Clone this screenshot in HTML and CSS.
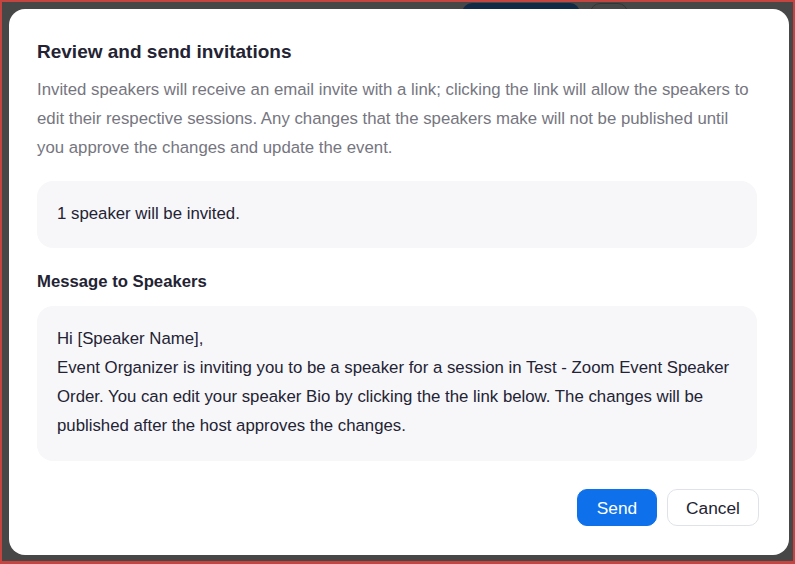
FILE: index.html
```html
<!DOCTYPE html>
<html lang="en">
<head>
<meta charset="utf-8">
<title>Review and send invitations</title>
<link rel="stylesheet" href="styles.css">
</head>
<body>
<div class="screen">
  <div class="page">
    <div class="page-top">
      <span class="pbtn pbtn-primary"></span>
      <span class="pbtn pbtn-outline"></span>
    </div>
  </div>
  <div class="overlay">
    <div class="modal" role="dialog" aria-labelledby="dlg-title">
      <h2 class="modal-title" id="dlg-title">Review and send invitations</h2>
      <p class="modal-desc">Invited speakers will receive an email invite with a link; clicking the link will allow the speakers to edit their respective sessions. Any changes that the speakers make will not be published until you approve the changes and update the event.</p>
      <div class="info-box">1 speaker will be invited.</div>
      <h3 class="section-label">Message to Speakers</h3>
      <div class="message-box">
        <div>Hi [Speaker Name],</div>
        <div>Event Organizer is inviting you to be a speaker for a session in Test - Zoom Event Speaker Order. You can edit your speaker Bio by clicking the the link below. The changes will be published after the host approves the changes.</div>
      </div>
      <div class="modal-footer">
        <button class="btn btn-primary" type="button">Send</button>
        <button class="btn btn-default" type="button">Cancel</button>
      </div>
    </div>
  </div>
</div>
</body>
</html>
```

FILE: styles.css
```css
* { box-sizing: border-box; }

html, body {
  margin: 0;
  padding: 0;
}

body {
  font-family: "Liberation Sans", Arial, sans-serif;
  background: #ffffff;
}

.screen {
  position: relative;
  width: 795px;
  height: 564px;
  border: 2px solid #c6443f;
  border-bottom-width: 3px;
  overflow: hidden;
  background: #ffffff;
}

/* underlying page (dimmed by the overlay) */
.page {
  display: flex;
  flex-direction: column;
  height: 100%;
}

.page-top {
  display: flex;
  gap: 10px;
  padding: 1px 0 0 460px;
}

.pbtn {
  display: block;
  height: 32px;
  border-radius: 10px;
}

.pbtn-primary {
  width: 118px;
  background: #4596ff;
}

.pbtn-outline {
  width: 38px;
  border: 1px solid #b9bcc4;
  background: #ffffff;
}

/* overlay + modal */
.overlay {
  position: absolute;
  inset: 0;
  background: rgba(0, 0, 0, 0.72);
  padding: 7px 4px 4px 7px;
}

.modal {
  width: 780px;
  height: 546px;
  background: #ffffff;
  border-radius: 16px;
  padding: 31px 32px 29px 28px;
  display: flex;
  flex-direction: column;
  color: #232333;
}

.modal-title {
  margin: 0;
  font-size: 19px;
  line-height: 24px;
  font-weight: 700;
  color: #232333;
}

.modal-desc {
  margin: 11px 0 0;
  font-size: 16.8px;
  line-height: 29px;
  color: #76767f;
}

.info-box {
  margin-top: 19px;
  background: #f7f7fa;
  border-radius: 16px;
  padding: 18px 20px 20px;
  font-size: 16.8px;
  line-height: 29px;
  color: #232333;
}

.section-label {
  margin: 22px 0 0;
  font-size: 16.7px;
  line-height: 24px;
  font-weight: 700;
  color: #232333;
}

.message-box {
  margin-top: 12px;
  background: #f7f7fa;
  border-radius: 16px;
  padding: 18px 20px 21px;
  font-size: 16.8px;
  line-height: 29px;
  color: #232333;
}

.modal-footer {
  margin-top: auto;
  display: flex;
  justify-content: flex-end;
  gap: 10px;
  margin-right: -2px;
}

.btn {
  height: 37px;
  border-radius: 10px;
  font-family: "Liberation Sans", Arial, sans-serif;
  font-size: 17.3px;
  line-height: 20px;
  padding: 0;
  cursor: pointer;
}

.btn-primary {
  width: 80px;
  background: #0e71eb;
  border: 1px solid #0e71eb;
  color: #ffffff;
}

.btn-default {
  width: 92px;
  background: #ffffff;
  border: 1px solid #dfe3e8;
  color: #232333;
}
```
